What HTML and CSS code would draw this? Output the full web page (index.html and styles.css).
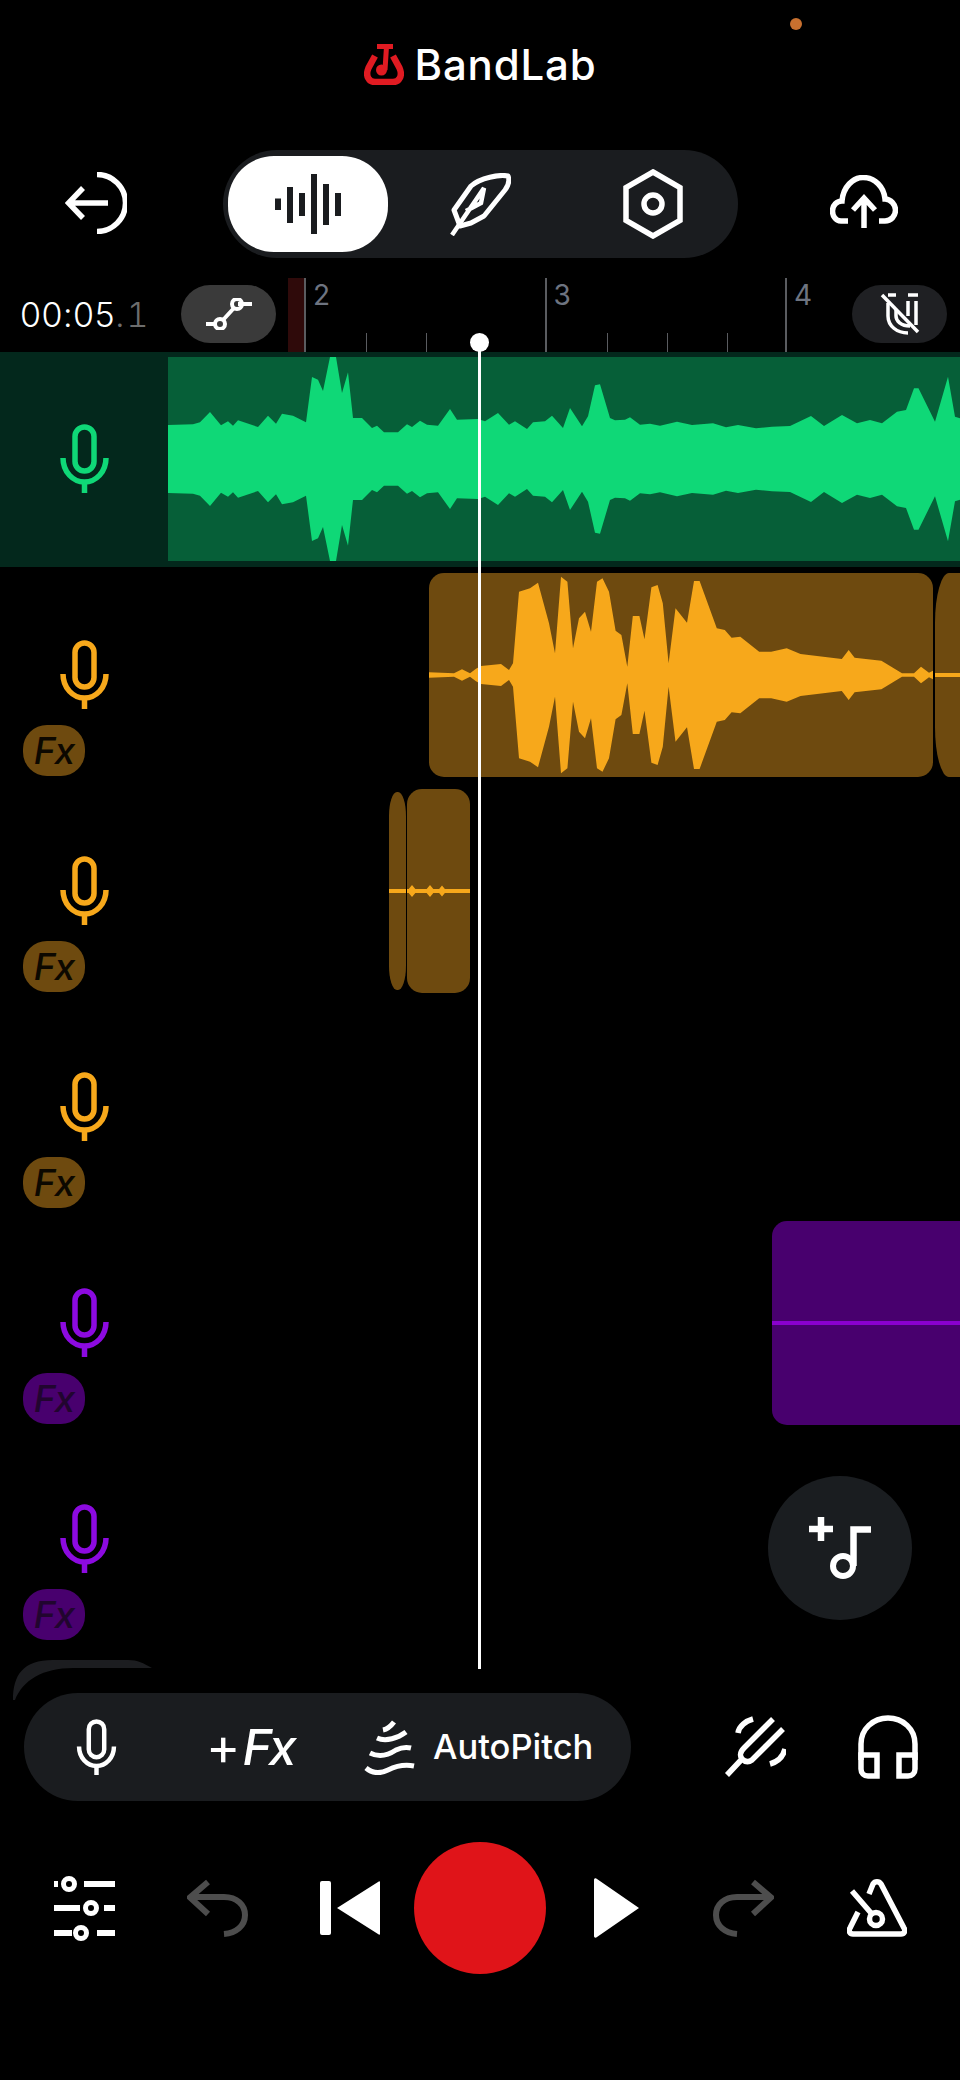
FILE: index.html
```html
<!DOCTYPE html>
<html lang="en">

<head>
    <meta charset="UTF-8">
    <meta name="viewport" content="width=device-width, initial-scale=1.0">
    <title>BandLab Studio</title>
    <link rel="stylesheet" href="styles.css">
</head>

<body>

    <svg class="defs" aria-hidden="true">
        <symbol id="mic" viewBox="0 0 49 69">
            <rect x="15" y="3" width="19" height="44" rx="9.5" fill="none" stroke="currentColor" stroke-width="5.5"/>
            <path d="M3 34C3 48 13 58 24.5 58C36 58 46 48 46 34M24.5 58V69" fill="none" stroke="currentColor" stroke-width="5.5"/>
        </symbol>
        <symbol id="redo" viewBox="0 0 61 58">
            <path d="M58 18H24C11 18 3 26 3 36C3 47 12 54 24 55M40 3L58 18.500L40 35" fill="none" stroke="currentColor" stroke-width="6"/>
        </symbol>
    </svg>

    <div class="status-dot"></div>

    <header class="logo-bar">
        <svg class="logo-icon" viewBox="0 0 40 41">
            <path d="M11 12L4.500 24C1 32 5 38 11 38H29C35 38 39 32 35.500 24L29 12" fill="none" stroke="#e01b22" stroke-width="6.500"/>
            <path d="M13 2.500H29M22.500 2.500L21 26" fill="none" stroke="#e01b22" stroke-width="5"/>
            <circle cx="17.500" cy="26" r="5.500" fill="#e01b22"/>
        </svg>
        <span class="logo-text">BandLab</span>
    </header>

    <section class="top-row">
        <svg class="icon-back" viewBox="0 0 62 62">
            <path d="M43 31H4M18 16L3.500 31L18 46M32 2.500A28.500 28.500 0 0 1 32 59.500" fill="none" stroke="#fff" stroke-width="5.500"/>
        </svg>
        <div class="mode-pill">
            <div class="mode-tab mode-tab-active">
                <svg class="icon-wave" viewBox="0 0 66 60">
                    <path d="M3 24.500V36M15 13V49M27 19V42M39 0V60M51 10V51M63 19V42" fill="none" stroke="#1a1c1f" stroke-width="6"/>
                </svg>
            </div>
            <div class="mode-tab">
                <svg class="icon-feather" viewBox="0 0 61 63">
                    <path d="M4 37L21 13C30 5 50 1 58 3C60 8 58 13 55 17L34 43L21 50L10 53Z" fill="none" stroke="#fff" stroke-width="5" stroke-linejoin="round"/>
                    <path d="M2 62L34 15L31 30L16 38" fill="none" stroke="#fff" stroke-width="4.500"/>
                </svg>
            </div>
            <div class="mode-tab">
                <svg class="icon-hex" viewBox="0 0 60 70">
                    <path d="M30 3L57 18.500V51.500L30 67L3 51.500V18.500Z" fill="none" stroke="#fff" stroke-width="5.500"/>
                    <circle cx="30" cy="35" r="9" fill="none" stroke="#fff" stroke-width="5.500"/>
                </svg>
            </div>
        </div>
        <svg class="icon-cloud" viewBox="0 0 68 53">
            <path d="M18 46H11C5 46 2.500 40 2.500 36C2.500 30 7 26 12 26C13 12 23 2.500 33 2.500C45 2.500 54 12 55 24C61 24 65.500 30 65.500 35C65.500 41 61 46 55 46H49" fill="none" stroke="#fff" stroke-width="5.500"/>
            <path d="M34 53V23M23 35L34 23L45 35" fill="none" stroke="#fff" stroke-width="5.500"/>
        </svg>
    </section>

    <section class="ruler-row">
        <div class="time">00:05<span class="time-dim">.1</span></div>
        <div class="round-btn round-btn-on">
            <svg class="icon-auto" viewBox="0 0 46 32">
                <path d="M0 26H9M32 6H46M17 22L28 10" fill="none" stroke="#fff" stroke-width="4"/>
                <circle cx="14" cy="26" r="5" fill="none" stroke="#fff" stroke-width="4"/>
                <circle cx="31" cy="6" r="5" fill="none" stroke="#fff" stroke-width="4"/>
            </svg>
        </div>
        <div class="timeline">
            <div class="loop-band"></div>
            <div class="bar">
                <span class="bar-num">2</span>
                <i class="tick"></i>
                <i class="tick"></i>
                <i></i>
            </div>
            <div class="bar">
                <span class="bar-num">3</span>
                <i class="tick"></i>
                <i class="tick"></i>
                <i class="tick"></i>
            </div>
            <div class="bar bar-last">
                <span class="bar-num">4</span>
            </div>
        </div>
        <div class="round-btn">
            <svg class="icon-magnet" viewBox="0 0 40 42">
                <path d="M2 2L38 39" fill="none" stroke="#fff" stroke-width="3.500"/>
                <path d="M8 10V23C8 33 17 40 28 40M16 16V23C16 28 21 33 30 33M28 8V23M36 8V32M8 2H16M28 2H38" fill="none" stroke="#fff" stroke-width="3.500"/>
            </svg>
        </div>
    </section>

    <main class="tracks">
        <div class="track track-selected track-green">
            <div class="track-head">
                <svg class="mic"><use href="#mic"/></svg>
            </div>
            <div class="track-lane">
                <div class="clip-green">
                    <svg class="wave-svg" viewBox="168 -102 792 204" preserveAspectRatio="none">
                        <polygon id="green-wave" fill="#0fd877" points="168,0 168,34 193,34.700 200,36.700 210,47 221,33.700 228,37.700 233,33.300 238,38.700 258,32 268,43.300 276,35.300 282,45.300 293,43.300 306,36.700 312,82 318,79.300 323,68 330,102 336,102 342,66 348,86.700 353,41 362,41 372,31 377,33.300 384,26.700 398,26.700 407,34.700 412,32 420,38.300 427,34.300 438,33.300 450,50 457,39.300 478,40 485,37.700 498,46 509,34.300 515,37.700 527,30 533,36.700 545,37.700 552,43.300 563,31 570,51 582,32.700 588,42.700 595,73.700 600,74.700 610,41 615,38.700 625,39.300 630,41.700 640,34.300 650,35.300 660,33.300 677,37.300 692,34 713,35.700 726,31.700 738,34 756,30.700 772,32.300 790,33 811,43 824,33 842,44 857,35.700 870,39 882,35.700 897,47.300 906,49 914,70.700 918.500,70.700 935,37.300 948,82.300 955,42.300 960,40.700 960,0"/>
                        <use href="#green-wave" transform="scale(1 -1)"/>
                    </svg>
                </div>
            </div>
        </div>

        <div class="track track-orange">
            <div class="track-head">
                <svg class="mic"><use href="#mic"/></svg>
                <div class="fx-badge">Fx</div>
            </div>
            <div class="track-lane">
                <div class="clip clip-long">
                    <svg class="wave-svg" viewBox="429 -102 504 204" preserveAspectRatio="none">
                        <polygon id="orange-wave" fill="#f7a81b" points="429,0 429,2.700 454,1.700 462,5.700 470,1.700 476,6.300 481,9 501,11 509,5 513,11.700 519,83.300 530,86.700 538,92.300 549,51.700 555,21.700 561,98.300 567.400,93.300 573,26.700 579,56.700 585,63.300 591,43.300 597,93.300 602.500,96.700 609,83.300 615.600,44.300 621.400,40 627.300,8.300 632.800,59 639.400,59 644.500,35.700 651.400,87.700 657.600,90 662.800,71.700 668.600,11.700 675.500,66.700 687,52.300 694,94 699.600,94 716.800,46.700 724.800,45 731.600,37.300 740.300,38.300 759.200,23.300 771.200,23.300 786.700,26.700 800.500,21 841.800,16 848.700,25 854.600,17.300 881.400,14.300 902,1.700 914,1.700 921,8.300 929,2.300 933,4.300 933,0"/>
                        <use href="#orange-wave" transform="scale(1 -1)"/>
                    </svg>
                </div>
                <div class="clip clip-tail"><div class="clip-line"></div></div>
            </div>
        </div>

        <div class="track track-orange">
            <div class="track-head">
                <svg class="mic"><use href="#mic"/></svg>
                <div class="fx-badge">Fx</div>
            </div>
            <div class="track-lane">
                <div class="clip clip-stub"><div class="clip-line"></div></div>
                <div class="clip clip-short">
                    <svg class="dots-svg" viewBox="407 -7 63 14">
                        <path fill="#f7a81b" d="M407 -2H470V2H407ZM412 -6L417 0L412 6L407 0ZM430 -6L435 0L430 6L425 0ZM442 -5.500L446.500 0L442 5.500L437.500 0Z"/>
                    </svg>
                </div>
            </div>
        </div>

        <div class="track track-orange">
            <div class="track-head">
                <svg class="mic"><use href="#mic"/></svg>
                <div class="fx-badge">Fx</div>
            </div>
            <div class="track-lane"></div>
        </div>

        <div class="track track-purple">
            <div class="track-head">
                <svg class="mic"><use href="#mic"/></svg>
                <div class="fx-badge">Fx</div>
            </div>
            <div class="track-lane">
                <div class="clip clip-end"><div class="clip-line"></div></div>
            </div>
        </div>

        <div class="track track-purple">
            <div class="track-head">
                <svg class="mic"><use href="#mic"/></svg>
                <div class="fx-badge">Fx</div>
            </div>
            <div class="track-lane"></div>
        </div>

        <button class="add-track">
            <svg class="icon-add" viewBox="0 0 62 63">
                <path d="M12 0V24M0 12H24M44.500 49V12.500H62" fill="none" stroke="#fff" stroke-width="6.500"/>
                <circle cx="34" cy="49" r="10" fill="none" stroke="#fff" stroke-width="6"/>
            </svg>
        </button>
    </main>

    <div class="playhead"></div>

    <section class="tool-row">
        <svg class="ghost-card" viewBox="0 0 140 40">
            <path d="M0 40C0 15 10 0 40 0H115C125 0 130 3 139 8H60C30 8 10 20 2 40Z" fill="#1c1d20"/>
        </svg>
        <div class="tool-pill">
            <svg class="tool-mic"><use href="#mic"/></svg>
            <div class="tool-fx"><span class="tool-plus">+</span><span class="tool-fx-text">Fx</span></div>
            <svg class="icon-pitch" viewBox="0 0 51 55">
                <path d="M19 10C24 9 27 6 30 2M13 18C22 22 34 18 42 12M6 33C16 38 26 34 32 30C38 27 43 27 47 28M2 48C8 53 16 54 24 50C32 46 40 44 50 46" fill="none" stroke="#fff" stroke-width="5"/>
            </svg>
            <span class="tool-label">AutoPitch</span>
        </div>
        <svg class="icon-fork" viewBox="0 0 62 62">
            <path d="M49 3L20 32C15 37 16 40 18 43C21 46 24 47 28 44L59 13M3 59L18 43M14 17C15 10 22 5 29 3M46 48C53 46 59 41 61 33" fill="none" stroke="#fff" stroke-width="5.500"/>
        </svg>
        <svg class="icon-phones" viewBox="0 0 60 64">
            <path d="M3 45V29C3 14 15 3 30 3C45 3 57 14 57 29V45" fill="none" stroke="#fff" stroke-width="5.500"/>
            <path d="M3 40H19V61H10C6 61 3 58 3 54ZM57 40H41V61H50C54 61 57 58 57 54Z" fill="none" stroke="#fff" stroke-width="5.500"/>
        </svg>
    </section>

    <footer class="transport">
        <svg class="icon-mixer" viewBox="0 0 61 65">
            <path d="M0 8H4M30 8H61M0 32H26M50 32H61M0 57H18M43 57H61" fill="none" stroke="#fff" stroke-width="6"/>
            <circle cx="15" cy="8" r="5.500" fill="none" stroke="#fff" stroke-width="5"/>
            <circle cx="37" cy="32" r="5.500" fill="none" stroke="#fff" stroke-width="5"/>
            <circle cx="27" cy="57" r="5.500" fill="none" stroke="#fff" stroke-width="5"/>
        </svg>
        <svg class="icon-hist icon-undo"><use href="#redo"/></svg>
        <svg class="icon-back-skip" viewBox="0 0 60 54">
            <rect width="11" height="54" rx="2" fill="#fff"/>
            <path d="M60 1V53C60 54 59 54 58 53L17 27L58 1C59 0 60 0 60 1Z" fill="#fff"/>
        </svg>
        <button class="record"></button>
        <svg class="icon-play" viewBox="0 0 45 60">
            <path d="M0 2C0 0 2 0 3 1L45 30L3 59C2 60 0 60 0 58Z" fill="#fff"/>
        </svg>
        <svg class="icon-hist"><use href="#redo"/></svg>
        <svg class="icon-metro" viewBox="0 0 60 58">
            <path d="M22 15L26 5C28 2 32 2 34 5L57 49C59 52 57 55 54 55H6C3 55 1 52 3 49L11 33M5 12L24 34" fill="none" stroke="#fff" stroke-width="5.500"/>
            <circle cx="29" cy="40" r="6.500" fill="none" stroke="#fff" stroke-width="5.500"/>
        </svg>
    </footer>

</body>

</html>
```

FILE: styles.css
```css
* {
    box-sizing: border-box;
}

body {
    position: relative;
    width: 960px;
    height: 2080px;
    margin: 0;
    overflow: hidden;
    background-color: #000;
    color: #fff;
    font-family: Inter, "Liberation Sans", sans-serif;
}

svg {
    display: block;
    flex: none;
}

.defs {
    display: none;
}

.status-dot {
    position: absolute;
    top: 18px;
    left: 790px;
    width: 12px;
    height: 12px;
    border-radius: 50%;
    background-color: #c8702f;
}

/* Logo */
.logo-bar {
    display: flex;
    justify-content: center;
    gap: 11px;
    height: 150px;
    padding-top: 44px;
}

.logo-icon {
    width: 40px;
    height: 41px;
}

.logo-text {
    font-size: 42px;
    font-weight: 500;
    line-height: 42px;
    letter-spacing: 0.8px;
}

/* Top controls */
.top-row {
    display: flex;
    align-items: center;
    height: 108px;
    margin-bottom: 20px;
    padding-left: 65px;
}

.icon-back {
    width: 62px;
    height: 62px;
    margin-top: -2px;
}

.mode-pill {
    display: grid;
    grid-template-columns: 160px 184px 162px;
    align-items: center;
    width: 515px;
    height: 108px;
    margin-left: 96px;
    padding-left: 5px;
    border-radius: 54px;
    background-color: #1a1c1f;
}

.mode-tab {
    display: flex;
    justify-content: center;
    align-items: center;
    height: 96px;
}

.mode-tab-active {
    border-radius: 46px;
    background-color: #fff;
}

.icon-wave {
    width: 66px;
    height: 60px;
}

.icon-feather {
    width: 61px;
    height: 63px;
}

.icon-hex {
    width: 60px;
    height: 70px;
}

.icon-cloud {
    width: 68px;
    height: 53px;
    margin-top: -5px;
    margin-left: 92px;
}

/* Ruler */
.ruler-row {
    display: flex;
    height: 74px;
    padding-left: 20px;
}

.time {
    width: 161px;
    padding-top: 22px;
    font-size: 34px;
    font-weight: 300;
    line-height: 30px;
    letter-spacing: 0.5px;
}

.time-dim {
    color: #6d6d6d;
    font-feature-settings: "tnum";
    letter-spacing: 2px;
}

.round-btn {
    display: flex;
    justify-content: center;
    align-items: center;
    width: 95px;
    height: 58px;
    margin-top: 7px;
    border-radius: 29px;
    background-color: #1f2023;
}

.round-btn-on {
    background-color: #3a3a3a;
}

.icon-auto {
    width: 46px;
    height: 32px;
}

.icon-magnet {
    width: 40px;
    height: 42px;
}

.timeline {
    display: flex;
    width: 564px;
    margin-left: 12px;
    overflow: hidden;
}

.loop-band {
    flex: none;
    width: 16px;
    background-color: #2f0a0a;
}

.bar {
    flex: none;
    display: grid;
    grid-template-columns: repeat(4, 60px);
    align-items: end;
    width: 240.500px;
    height: 74px;
    border-left: 2px solid #5a5c60;
}

.bar-last {
    width: 70px;
}

.bar-num {
    align-self: start;
    padding-left: 7px;
    color: #6e7480;
    font-size: 28px;
    font-weight: 400;
    line-height: 34px;
}

.tick {
    display: block;
    height: 19px;
    border-left: 1px solid #5a5c60;
}

/* Tracks */
.tracks {
    position: relative;
}

.track {
    display: flex;
    height: 216px;
}

.track-green {
    color: #0fd877;
}

.track-orange {
    color: #f7a81b;
}

.track-purple {
    color: #8c0ae0;
}

.track-selected {
    height: 215px;
    margin-bottom: 1px;
    background-color: #03281c;
}

.track-head {
    flex: none;
    width: 168px;
    padding-top: 72px;
}

.mic {
    width: 49px;
    height: 69px;
    margin-left: 60px;
}

.fx-badge {
    width: 62px;
    height: 51px;
    margin-top: 16px;
    margin-left: 23px;
    border-radius: 24px;
    background-color: #6e4a0f;
    color: #0c0800;
    font-size: 37px;
    font-style: italic;
    font-weight: 500;
    line-height: 51px;
    letter-spacing: -1px;
    text-align: center;
}

.track-purple .fx-badge {
    background-color: #48006e;
    color: #21052f;
}

.track-lane {
    position: relative;
    flex: 1;
}

.clip-green {
    position: absolute;
    top: 5px;
    left: 0;
    right: 0;
    height: 204px;
    background-color: #065f38;
}

.clip {
    position: absolute;
    top: 5px;
    display: flex;
    align-items: center;
    height: 204px;
    overflow: hidden;
    border-radius: 15px;
    background-color: #6e4a0f;
}

.wave-svg {
    width: 100%;
    height: 100%;
}

.clip-line {
    width: 100%;
    height: 4px;
    background-color: #f7a81b;
}

.clip-long {
    left: 261px;
    width: 504px;
}

.clip-tail {
    left: 767px;
    right: 0;
    border-radius: 14px 0 0 14px / 50px 0 0 50px;
}

.clip-stub {
    top: 8px;
    left: 221px;
    width: 17px;
    height: 198px;
    border-radius: 8px / 24px;
}

.clip-short {
    left: 239px;
    width: 63px;
}

.dots-svg {
    width: 63px;
    height: 14px;
}

.clip-end {
    left: 604px;
    right: 0;
    border-radius: 15px 0 0 15px;
    background-color: #48006e;
}

.clip-end .clip-line {
    background-color: #8a00cf;
}

.add-track {
    position: absolute;
    top: 1124px;
    left: 768px;
    display: flex;
    justify-content: center;
    align-items: center;
    width: 144px;
    height: 144px;
    padding: 0;
    border: none;
    border-radius: 50%;
    background-color: #1a1d20;
}

.icon-add {
    width: 62px;
    height: 63px;
}

.playhead {
    position: absolute;
    top: 342px;
    left: 478px;
    width: 3px;
    height: 1327px;
    background-color: #fff;
}

.playhead::before {
    content: "";
    position: absolute;
    top: -9px;
    left: -8px;
    width: 19px;
    height: 19px;
    border-radius: 50%;
    background-color: #fff;
}

/* Tools */
.tool-row {
    position: relative;
    display: flex;
    align-items: center;
    padding-top: 45px;
    padding-left: 24px;
}

.ghost-card {
    position: absolute;
    top: 12px;
    left: 13px;
    width: 140px;
    height: 40px;
}

.tool-pill {
    display: flex;
    align-items: center;
    width: 607px;
    height: 108px;
    padding-left: 52px;
    border-radius: 54px;
    background-color: #1a1c1f;
}

.tool-mic {
    width: 41px;
    height: 56px;
    color: #fff;
}

.tool-fx {
    display: flex;
    align-items: center;
    width: 85px;
    margin-left: 89px;
}

.tool-plus {
    font-size: 52px;
    font-weight: 400;
    line-height: 50px;
}

.tool-fx-text {
    margin-left: 2px;
    font-size: 50px;
    font-style: italic;
    font-weight: 500;
    line-height: 50px;
    letter-spacing: -3px;
}

.icon-pitch {
    width: 51px;
    height: 55px;
    margin-left: 73px;
}

.tool-label {
    margin-left: 18px;
    font-size: 34.500px;
    font-weight: 500;
    line-height: 40px;
}

.icon-fork {
    width: 62px;
    height: 62px;
    margin-left: 93px;
}

.icon-phones {
    width: 60px;
    height: 64px;
    margin-left: 72px;
}

/* Transport */
.transport {
    display: grid;
    grid-template-columns: 133px 133px 132px 128px 144px 110px 158px;
    justify-items: center;
    align-items: center;
    height: 132px;
    margin-top: 41px;
    padding-left: 18px;
}

.icon-mixer {
    width: 61px;
    height: 65px;
}

.icon-hist {
    width: 61px;
    height: 58px;
    color: #4d4d4d;
}

.icon-undo {
    transform: scaleX(-1);
}

.icon-back-skip {
    width: 60px;
    height: 54px;
}

.record {
    width: 132px;
    height: 132px;
    padding: 0;
    border: none;
    border-radius: 50%;
    background-color: #e01419;
}

.icon-play {
    width: 45px;
    height: 60px;
}

.icon-metro {
    width: 60px;
    height: 58px;
}
```
